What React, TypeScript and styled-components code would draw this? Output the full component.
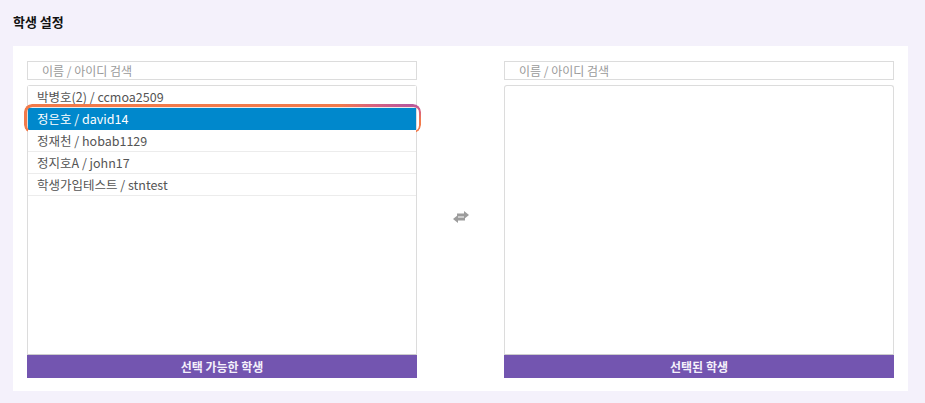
import React from "react";
import styled, { createGlobalStyle } from "styled-components";

const Global = createGlobalStyle`
  html, body { margin: 0; padding: 0; }
  body {
    background: #f4f1fb;
    font-family: "Noto Sans CJK KR", "Noto Sans", sans-serif;
  }
  * { box-sizing: border-box; }
`;

const Page = styled.div`
  padding: 11px 17px 0 13px;
`;

const Title = styled.h2`
  margin: 0 0 13px;
  font-size: 13px;
  font-weight: 700;
  color: #111;
  line-height: 22px;
`;

const Panel = styled.section`
  background: #fff;
  padding: 15px 14px 13px;
  display: grid;
  grid-template-columns: 390px 1fr 390px;
`;

const Column = styled.div`
  display: flex;
  flex-direction: column;
`;

const Search = styled.input`
  height: 19px;
  border: 1px solid #dcdcdc;
  padding: 0 0 0 14px;
  font-family: inherit;
  font-size: 12px;
  color: #555;
  outline: none;
  margin-bottom: 5px;
  &::placeholder { color: #9a9a9a; }
`;

const ListBox = styled.ul`
  list-style: none;
  margin: 0;
  padding: 0;
  height: 270px;
  border: 1px solid #dcdcdc;
  border-bottom-color: #ccc;
  border-radius: 3px 3px 0 0;
`;

const Item = styled.li<{ $active?: boolean }>`
  position: relative;
  height: 22px;
  line-height: 21px;
  padding-left: 9px;
  font-size: 12.5px;
  color: ${(p) => (p.$active ? "#fff" : "#555")};
  background: ${(p) => (p.$active ? "#0088cc" : "#fff")};
  border-bottom: 1px solid ${(p) => (p.$active ? "#0088cc" : "#ececec")};
  ${(p) =>
    p.$active &&
    `
    &::after {
      content: "";
      position: absolute;
      inset: -4px -5px -4px -4px;
      border-radius: 8px;
      padding: 2.5px;
      background: radial-gradient(ellipse 70px 16px at 97% 0%, #b4579f 0, #d8617f 50%, #f27a4a 100%), #f27a4a;
      -webkit-mask: linear-gradient(#000 0 0) content-box, linear-gradient(#000 0 0);
      -webkit-mask-composite: xor;
      mask-composite: exclude;
      pointer-events: none;
    }
  `}
`;

const Footer = styled.div`
  height: 23px;
  background: #7355b0;
  color: #f4f0fb;
  font-size: 12px;
  font-weight: 700;
  text-align: center;
  line-height: 23px;
`;

const Middle = styled.div`
  display: flex;
  align-items: center;
  justify-content: center;
  padding: 0 0 5px 0;
`;

const SwapIcon = () => (
  <svg width="18" height="12" viewBox="0 0 18 12" fill="#9c9c9c">
    <polygon points="5,2.6 12,2.6 12,0 17,4 12,8 12,5.4 5,5.4" />
    <polygon points="13,6.6 6,6.6 6,4 1,8 6,12 6,9.4 13,9.4" />
  </svg>
);

const students = [
  "박병호(2) / ccmoa2509",
  "정은호 / david14",
  "정재천 / hobab1129",
  "정지호A / john17",
  "학생가입테스트 / stntest",
];

export default function App() {
  return (
    <>
      <Global />
      <Page>
        <Title>학생 설정</Title>
        <Panel>
          <Column>
            <Search placeholder="이름 / 아이디 검색" />
            <ListBox>
              {students.map((s, i) => (
                <Item key={s} $active={i === 1}>
                  {s}
                </Item>
              ))}
            </ListBox>
            <Footer>선택 가능한 학생</Footer>
          </Column>
          <Middle>
            <SwapIcon />
          </Middle>
          <Column>
            <Search placeholder="이름 / 아이디 검색" />
            <ListBox />
            <Footer>선택된 학생</Footer>
          </Column>
        </Panel>
      </Page>
    </>
  );
}
